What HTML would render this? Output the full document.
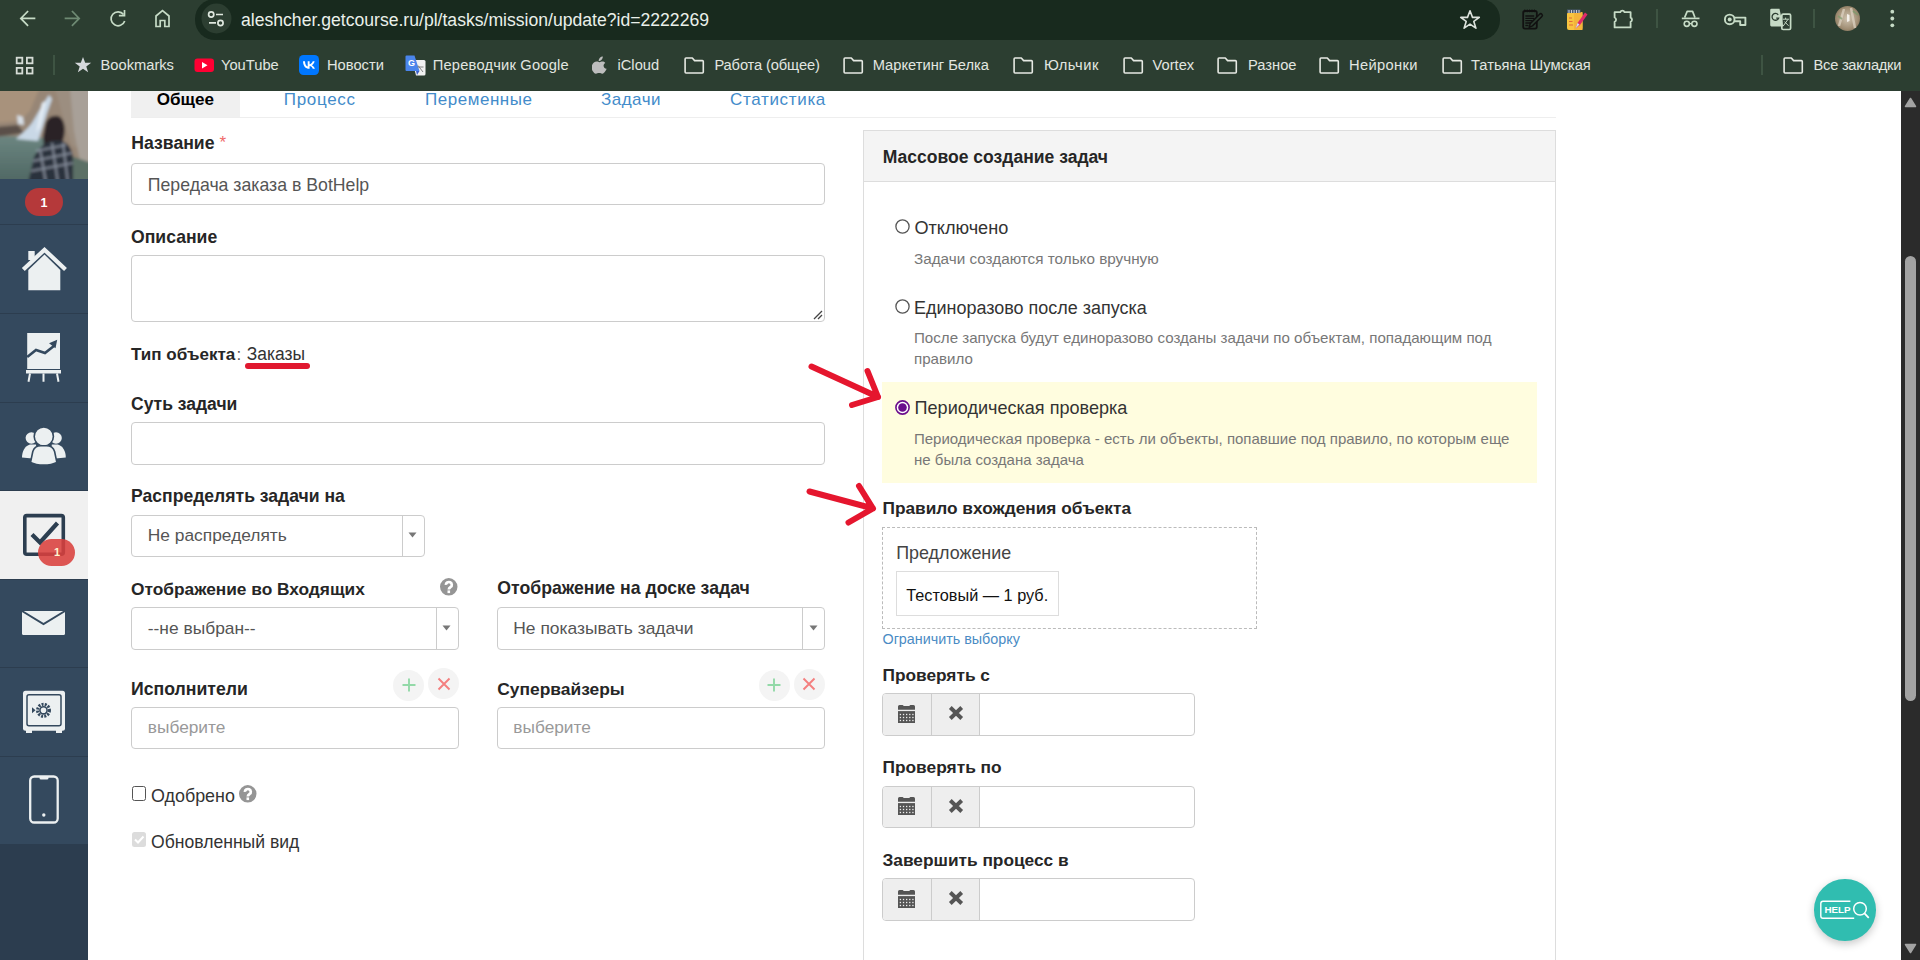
<!DOCTYPE html>
<html><head><meta charset="utf-8">
<style>
*{box-sizing:border-box;margin:0;padding:0}
html,body{width:1920px;height:960px;overflow:hidden;background:#fff;font-family:"Liberation Sans",sans-serif;color:#333}
.a{position:absolute}
.t{position:absolute;white-space:nowrap}
#chrome{position:absolute;left:0;top:0;width:1920px;height:91px;background:#2c3e31}
#omni{position:absolute;left:195px;top:-1px;width:1305px;height:41px;border-radius:20px;background:#182a1e}
.bm{position:absolute;top:56px;font-size:14.7px;color:#e2e6e0;white-space:nowrap;line-height:18px}
#side{position:absolute;left:0;top:91px;width:88px;height:869px;background:#2c3d4f}
.nav{position:absolute;left:0;width:88px;background:#34495e}
</style></head><body>
<div id="chrome">
  <svg class="a" style="left:0;top:0" width="200" height="40" viewBox="0 0 200 40">
    <g fill="none" stroke="#c6dbc6" stroke-width="1.7" stroke-linecap="square">
      <path d="M34.5 18.4H22M27.5 11.6L20.8 18.4L27.5 25.2"/>
    </g>
    <g fill="none" stroke="#6e8a73" stroke-width="1.7" stroke-linecap="square">
      <path d="M65.5 18.4H78M72.5 11.6L79.2 18.4L72.5 25.2"/>
    </g>
    <g fill="none" stroke="#c6dbc6" stroke-width="1.7">
      <path d="M123.6 14.5A7 7 0 1 0 124.7 21"/>
      <path d="M124.5 10.8V15.6H119.7" stroke-linecap="square"/>
    </g>
    <g fill="none" stroke="#c6dbc6" stroke-width="1.7">
      <path d="M156 26.5V16L162.5 10.5L169 16V26.5H164.8V20.5H160.2V26.5Z"/>
    </g>
  </svg>
  <div id="omni"></div>
  <svg class="a" style="left:200;top:3px;left:201px" width="32" height="32" viewBox="0 0 32 32">
    <circle cx="15.5" cy="15.5" r="15" fill="#2c3e31"/>
    <g fill="none" stroke="#dfe8df" stroke-width="1.7">
      <circle cx="10.2" cy="11.5" r="2.6"/><circle cx="19.5" cy="20" r="2.6"/>
      <path d="M15 11.5H22M8 19.8H15"/>
    </g>
  </svg>
  <div class="a" style="left:241px;top:9px;font-size:17.6px;color:#eaf0ea;line-height:22px;white-space:nowrap">aleshcher.getcourse.ru/pl/tasks/mission/update?id=2222269</div>
  <svg class="a" style="left:1458px;top:8px" width="24" height="24" viewBox="0 0 24 24">
    <path d="M12 2.8L14.5 9.4H21.3L15.8 13.4L17.9 20.2L12 16.1L6.1 20.2L8.2 13.4L2.7 9.4H9.5Z" fill="none" stroke="#dde3dd" stroke-width="1.6" stroke-linejoin="round"/>
  </svg>
  <!-- extensions -->
  <svg class="a" style="left:1520px;top:7px" width="26" height="26" viewBox="0 0 26 26">
    <rect x="3.2" y="4" width="13.6" height="17.6" rx="1.8" fill="none" stroke="#111" stroke-width="1.8"/>
    <path d="M4.8 2.4V5.2M7.2 2.4V5.2M9.6 2.4V5.2M12 2.4V5.2M14.4 2.4V5.2" stroke="#111" stroke-width="1.1"/>
    <path d="M5.3 9H14.2M5.3 11.4H14.2M5.3 13.7H12.5M5.3 16H10.5M5.3 18.5H8.5" stroke="#111" stroke-width="1.3"/>
    <path d="M9.2 20.2L10.2 16.6L19.6 7.2A1.6 1.6 0 0 1 21.9 9.5L12.5 18.9Z" fill="#2c3e31" stroke="#111" stroke-width="1.5" stroke-linejoin="round"/>
  </svg>
  <svg class="a" style="left:1565px;top:7px" width="26" height="26" viewBox="0 0 26 26">
    <rect x="2" y="5" width="15.5" height="18" rx="2" fill="#f8c440"/>
    <rect x="9" y="5" width="8.5" height="18" fill="#f3b43a"/>
    <rect x="2" y="2.5" width="13.5" height="3.5" fill="#4a5a70"/>
    <path d="M4 3V6M6.5 3V6M9 3V6M11.5 3V6M14 3V6" stroke="#e8e8f0" stroke-width="0.8"/>
    <path d="M4 11H7M4 14.5H7.5M4 18H8" stroke="#e06a3a" stroke-width="1"/>
    <path d="M10.5 21.5L12.5 16L20 5.5L22.5 7.5L15 18Z" fill="#e02a6a"/>
    <path d="M10.5 21.5L12.5 16L14.5 17.5Z" fill="#cfe0f0"/>
  </svg>
  <svg class="a" style="left:1611px;top:4px" width="26" height="26" viewBox="0 0 26 26">
    <path d="M3.6 8.2H9.3A2.2 2.2 0 0 1 13.5 8.2H19.6V13.7A2.2 2.2 0 0 1 19.6 17.8V23.4H3.6V17.8A2.3 2.3 0 0 0 3.6 13.5Z" fill="none" stroke="#c6dbc6" stroke-width="1.8" stroke-linejoin="round"/>
  </svg>
  <div class="a" style="left:1656px;top:9px;width:2px;height:19px;background:#3e5443"></div>
  <svg class="a" style="left:1678px;top:4px" width="26" height="26" viewBox="0 0 26 26">
    <path d="M6.6 13.6L9.2 7.4H14.6L17 13.6" fill="none" stroke="#c6dbc6" stroke-width="1.7" stroke-linejoin="round"/>
    <path d="M3.8 14.4H21.5" stroke="#c6dbc6" stroke-width="1.7"/>
    <circle cx="8.8" cy="19.8" r="2.6" fill="none" stroke="#c6dbc6" stroke-width="1.6"/>
    <circle cx="16.4" cy="19.8" r="2.6" fill="none" stroke="#c6dbc6" stroke-width="1.6"/>
    <path d="M11.4 19.6H13.8" stroke="#c6dbc6" stroke-width="1.4"/>
  </svg>
  <svg class="a" style="left:1722px;top:4px" width="28" height="26" viewBox="0 0 28 26">
    <circle cx="7.7" cy="15.4" r="4.8" fill="none" stroke="#c6dbc6" stroke-width="1.9"/>
    <circle cx="7.7" cy="15.4" r="2" fill="#c6dbc6"/>
    <path d="M12.4 13.6H23.4V21H18.2V17.2H12.4" fill="none" stroke="#c6dbc6" stroke-width="1.9" stroke-linejoin="round"/>
  </svg>
  <svg class="a" style="left:1768px;top:4px" width="26" height="28" viewBox="0 0 26 28">
    <rect x="13.8" y="10.2" width="8.8" height="15.3" rx="1.3" fill="none" stroke="#c6dbc6" stroke-width="1.7"/>
    <path d="M3.5 4.7H11.5L15.2 22.4H3.5A1.3 1.3 0 0 1 2.2 21.1V6A1.3 1.3 0 0 1 3.5 4.7Z" fill="#c6dbc6"/>
    <path d="M10.2 10.8A3.4 3.4 0 1 0 10.6 14.2H8.2" fill="none" stroke="#2c3e31" stroke-width="1.3"/>
    <path d="M14.8 15.2H21M17.6 13.6V15.2M15.2 22L19.8 15.6M16.5 17.6L20.6 21.8" stroke="#c6dbc6" stroke-width="1"/>
  </svg>
  <div class="a" style="left:1813px;top:9px;width:2px;height:19px;background:#3e5443"></div>
  <svg class="a" style="left:1835px;top:6px" width="26" height="26" viewBox="0 0 26 26">
    <defs><radialGradient id="av" cx="0.5" cy="0.5" r="0.6"><stop offset="0" stop-color="#cfc3b0"/><stop offset="0.7" stop-color="#a08e74"/><stop offset="1" stop-color="#7c6a52"/></radialGradient></defs>
    <circle cx="12.5" cy="12.5" r="12.5" fill="url(#av)"/>
    <path d="M4 20L9 3M16 2L20 22" stroke="#e0d6c6" stroke-width="2.5" opacity="0.7"/>
    <path d="M12 8L14.5 9V15L12 16Z" fill="#f4f0ea"/>
    <path d="M3 10L7 13M18 5L23 9" stroke="#7a9a6a" stroke-width="2" opacity="0.7"/>
  </svg>
  <svg class="a" style="left:1886px;top:7px" width="12" height="24" viewBox="0 0 12 24">
    <circle cx="6.3" cy="4.7" r="1.9" fill="#c6dbc6"/><circle cx="6.3" cy="11.5" r="1.9" fill="#c6dbc6"/><circle cx="6.3" cy="18.3" r="1.9" fill="#c6dbc6"/>
  </svg>

  <!-- bookmarks bar -->
  <svg class="a" style="left:14px;top:55px" width="22" height="22" viewBox="0 0 22 22">
    <g fill="none" stroke="#d6dcd6" stroke-width="1.8">
      <rect x="2.7" y="2.7" width="5.6" height="5.6"/><rect x="12.9" y="2.7" width="5.6" height="5.6"/>
      <rect x="2.7" y="12.9" width="5.6" height="5.6"/><rect x="12.9" y="12.9" width="5.6" height="5.6"/>
    </g>
  </svg>
  <div class="a" style="left:53px;top:55px;width:2px;height:20px;background:#3e5443"></div>
  <svg class="a" style="left:73px;top:55px" width="20" height="20" viewBox="0 0 20 20">
    <path d="M10 2L12.2 7.8H18.2L13.3 11.4L15.1 17.3L10 13.7L4.9 17.3L6.7 11.4L1.8 7.8H7.8Z" fill="#d5d8dc"/>
  </svg>
  <div class="bm" style="left:100.5px">Bookmarks</div>
  <svg class="a" style="left:194px;top:55px" width="20" height="20" viewBox="0 0 20 20">
    <rect x="0.5" y="3.5" width="19.5" height="13.5" rx="3" fill="#ff0033"/>
    <path d="M8 7V13.5L13.5 10.2Z" fill="#fff"/>
  </svg>
  <div class="bm" style="left:221px">YouTube</div>
  <svg class="a" style="left:299px;top:55px" width="20" height="20" viewBox="0 0 20 20">
    <rect x="0" y="0" width="20" height="20" rx="4.5" fill="#0077ff"/>
    <path d="M4 6.2H6C6.1 9.5 7.4 11.2 8.7 11.5V6.2H10.6V9.3C11.9 9.2 13.2 7.8 13.7 6.2H15.6C15.2 8.2 13.8 9.6 12.8 10.2C13.8 10.7 15.3 11.8 15.9 13.8H13.8C13.3 12.4 12.1 11.2 10.6 11.1V13.8H10.4C6.5 13.8 4.2 11.1 4 6.2Z" fill="#fff"/>
  </svg>
  <div class="bm" style="left:327px">Новости</div>
  <svg class="a" style="left:405px;top:55px" width="21" height="21" viewBox="0 0 21 21">
    <path d="M7 5H19A1.5 1.5 0 0 1 20.5 6.5V19A1.5 1.5 0 0 1 19 20.5H11Z" fill="#f1f1f1"/>
    <path d="M1.5 0.5H9.5L14.5 16H1.5A1 1 0 0 1 0.5 15V1.5A1 1 0 0 1 1.5 0.5Z" fill="#4a85ec"/>
    <path d="M11 16H14.5L12 20Z" fill="#3a5ec8"/>
    <text x="3" y="11" font-family="Liberation Sans" font-size="9" font-weight="bold" fill="#fff">G</text>
    <path d="M13 10.5L18 17M12.5 12H18.5" stroke="#777" stroke-width="0.9"/>
  </svg>
  <div class="bm" style="left:432.7px;letter-spacing:0.2px">Переводчик Google</div>
  <svg class="a" style="left:592px;top:56px" width="16" height="18" viewBox="0 0 16 18">
    <path d="M10.8 0.5C10.9 1.8 10.3 3 9.5 3.8C8.8 4.6 7.7 5.1 6.7 5C6.6 3.8 7.2 2.6 7.9 1.8C8.7 1 9.9 0.5 10.8 0.5Z" fill="#bdbdbd"/>
    <path d="M14.6 12.8C14.2 13.8 14 14.2 13.4 15.1C12.6 16.3 11.5 17.8 10.2 17.8C9 17.8 8.7 17 7.1 17.1C5.5 17.1 5.1 17.8 3.9 17.8C2.6 17.8 1.6 16.4 0.8 15.3C-1.2 12.1 -0.3 8.1 1.9 6.5C2.7 5.9 3.8 5.6 4.8 5.6C5.9 5.6 6.7 6.2 7.6 6.2C8.5 6.2 9.1 5.6 10.4 5.6C11.4 5.6 12.5 6.1 13.3 7C10.6 8.5 11.1 12.3 14.6 12.8Z" fill="#bdbdbd"/>
  </svg>
  <div class="bm" style="left:617.5px">iCloud</div>
  <svg class="a" style="left:682.5px;top:56px" width="22" height="19" viewBox="0 0 22 19"><path d="M2.1 2.9A0.9 0.9 0 0 1 3 2H9.3L11.6 4.6H19.4A0.9 0.9 0 0 1 20.3 5.5V16.1A0.9 0.9 0 0 1 19.4 17H3A0.9 0.9 0 0 1 2.1 16.1Z" fill="none" stroke="#e6e9e3" stroke-width="1.6" stroke-linejoin="round"/></svg>
  <div class="bm" style="left:714.4px;letter-spacing:-0.13px">Работа (общее)</div>
  <svg class="a" style="left:841.7px;top:56px" width="22" height="19" viewBox="0 0 22 19"><path d="M2.1 2.9A0.9 0.9 0 0 1 3 2H9.3L11.6 4.6H19.4A0.9 0.9 0 0 1 20.3 5.5V16.1A0.9 0.9 0 0 1 19.4 17H3A0.9 0.9 0 0 1 2.1 16.1Z" fill="none" stroke="#e6e9e3" stroke-width="1.6" stroke-linejoin="round"/></svg>
  <div class="bm" style="left:872.7px">Маркетинг Белка</div>
  <svg class="a" style="left:1012.0px;top:56px" width="22" height="19" viewBox="0 0 22 19"><path d="M2.1 2.9A0.9 0.9 0 0 1 3 2H9.3L11.6 4.6H19.4A0.9 0.9 0 0 1 20.3 5.5V16.1A0.9 0.9 0 0 1 19.4 17H3A0.9 0.9 0 0 1 2.1 16.1Z" fill="none" stroke="#e6e9e3" stroke-width="1.6" stroke-linejoin="round"/></svg>
  <div class="bm" style="left:1044px;letter-spacing:0.55px">Юльчик</div>
  <svg class="a" style="left:1121.7px;top:56px" width="22" height="19" viewBox="0 0 22 19"><path d="M2.1 2.9A0.9 0.9 0 0 1 3 2H9.3L11.6 4.6H19.4A0.9 0.9 0 0 1 20.3 5.5V16.1A0.9 0.9 0 0 1 19.4 17H3A0.9 0.9 0 0 1 2.1 16.1Z" fill="none" stroke="#e6e9e3" stroke-width="1.6" stroke-linejoin="round"/></svg>
  <div class="bm" style="left:1152.5px">Vortex</div>
  <svg class="a" style="left:1216.3px;top:56px" width="22" height="19" viewBox="0 0 22 19"><path d="M2.1 2.9A0.9 0.9 0 0 1 3 2H9.3L11.6 4.6H19.4A0.9 0.9 0 0 1 20.3 5.5V16.1A0.9 0.9 0 0 1 19.4 17H3A0.9 0.9 0 0 1 2.1 16.1Z" fill="none" stroke="#e6e9e3" stroke-width="1.6" stroke-linejoin="round"/></svg>
  <div class="bm" style="left:1248px">Разное</div>
  <svg class="a" style="left:1317.5px;top:56px" width="22" height="19" viewBox="0 0 22 19"><path d="M2.1 2.9A0.9 0.9 0 0 1 3 2H9.3L11.6 4.6H19.4A0.9 0.9 0 0 1 20.3 5.5V16.1A0.9 0.9 0 0 1 19.4 17H3A0.9 0.9 0 0 1 2.1 16.1Z" fill="none" stroke="#e6e9e3" stroke-width="1.6" stroke-linejoin="round"/></svg>
  <div class="bm" style="left:1349px;letter-spacing:0.36px">Нейронки</div>
  <svg class="a" style="left:1440.7px;top:56px" width="22" height="19" viewBox="0 0 22 19"><path d="M2.1 2.9A0.9 0.9 0 0 1 3 2H9.3L11.6 4.6H19.4A0.9 0.9 0 0 1 20.3 5.5V16.1A0.9 0.9 0 0 1 19.4 17H3A0.9 0.9 0 0 1 2.1 16.1Z" fill="none" stroke="#e6e9e3" stroke-width="1.6" stroke-linejoin="round"/></svg>
  <div class="bm" style="left:1471px">Татьяна Шумская</div>
  <svg class="a" style="left:1781.6px;top:56px" width="22" height="19" viewBox="0 0 22 19"><path d="M2.1 2.9A0.9 0.9 0 0 1 3 2H9.3L11.6 4.6H19.4A0.9 0.9 0 0 1 20.3 5.5V16.1A0.9 0.9 0 0 1 19.4 17H3A0.9 0.9 0 0 1 2.1 16.1Z" fill="none" stroke="#e6e9e3" stroke-width="1.6" stroke-linejoin="round"/></svg>
  <div class="bm" style="left:1813.6px;letter-spacing:-0.27px">Все закладки</div>
  <div class="a" style="left:1760.7px;top:55px;width:2px;height:20px;background:#3e5443"></div>
</div>

<div id="side">
  <svg class="a" style="left:0;top:0" width="88" height="88" viewBox="0 0 88 88">
    <defs>
      <filter id="bl" x="-10%" y="-10%" width="120%" height="120%"><feGaussianBlur stdDeviation="1.6"/></filter>
      <linearGradient id="wat" x1="0" y1="0" x2="0" y2="1"><stop offset="0" stop-color="#6b8580"/><stop offset="1" stop-color="#4e6662"/></linearGradient>
      <pattern id="plaid" width="9" height="9" patternUnits="userSpaceOnUse" patternTransform="rotate(-20)">
        <rect width="9" height="9" fill="#283040"/>
        <rect x="0" y="3" width="9" height="1.6" fill="#8a98ac"/>
        <rect x="3" y="0" width="1.6" height="9" fill="#6c7a90"/>
      </pattern>
    </defs>
    <g filter="url(#bl)">
      <rect x="-4" y="-4" width="96" height="96" fill="#978676"/>
      <path d="M-4 -4H40L30 20L20 30L-4 32Z" fill="#a8927c"/>
      <path d="M55 -4H92V60L72 55L64 30Z" fill="#9c8e80"/>
      <path d="M70 -4H92V75L80 70L74 40Z" fill="#a8a098"/>
      <path d="M-4 36L18 34L24 42L-4 46Z" fill="#5a5048"/>
      <path d="M-4 46C10 44 30 46 44 47L60 52L70 92H-4Z" fill="url(#wat)"/>
      <path d="M68 64L92 72V92H70Z" fill="#5c7066"/>
      <path d="M49 4C45 10 38 22 32 32C26 40 20 44 16 48L38 50L42 38L47 22L52 8Z" fill="#c9d8e6"/>
      <path d="M42 12L46 10L40 36L36 42Z" fill="#e6eef6"/>
      <path d="M17 24L23 26L24 34L18 33Z" fill="#d8e0e8"/>
      <path d="M45 35C46 27 52 24 58 25C64 27 66 36 64 46C62 54 58 58 54 60L44 58L43 46Z" fill="#2a2428"/>
      <path d="M28 92L34 66C38 58 44 52 52 50L62 50C68 52 72 58 73 66L73 92Z" fill="#2c313e"/>
      <path d="M33 70L72 62M31 80L73 72M36 60L66 54M40 58L46 92M52 52L58 92M63 52L68 92" stroke="#b8c2d0" stroke-width="1.6" opacity="0.7"/>
    </g>
  </svg>
  <div class="nav" style="top:88px;height:45px"></div>
  <div class="a" style="left:25px;top:97px;width:38px;height:28px;border-radius:14px;background:#b5393a;color:#fff;font-weight:bold;font-size:12.5px;line-height:30px;text-align:center">1</div>
  <div class="nav" style="top:134px;height:88px"></div>
  <svg class="a" style="left:0;top:134px" width="88" height="88" viewBox="0 0 88 88">
    <path d="M28.3 45V65.3H60.3V45L44.5 29.5Z" fill="#ecf0f1"/>
    <path d="M23.3 44.5L44.5 24.8L65.5 44.5" fill="none" stroke="#ecf0f1" stroke-width="4.2"/>
    <rect x="28.3" y="26" width="6.4" height="9" fill="#ecf0f1"/>
  </svg>
  <div class="nav" style="top:223px;height:88px"></div>
  <svg class="a" style="left:0;top:223px" width="88" height="88" viewBox="0 0 88 88">
    <rect x="27.2" y="19" width="32.8" height="36" fill="#ecf0f1"/>
    <path d="M27.2 43L36 36L45 39L54.5 31.5" fill="none" stroke="#34495e" stroke-width="2.6"/>
    <path d="M50.5 29.5L56.2 27L55 33Z" fill="#34495e" stroke="#34495e" stroke-width="1.5"/>
    <rect x="26" y="56" width="35" height="3.5" fill="#ecf0f1"/>
    <path d="M30 59.5L28.5 67.7M43.5 59.5V67.7M57 59.5L58.5 67.7" stroke="#ecf0f1" stroke-width="2"/>
  </svg>
  <div class="nav" style="top:312px;height:87px"></div>
  <svg class="a" style="left:0;top:312px" width="88" height="88" viewBox="0 0 88 88">
    <circle cx="31.4" cy="35" r="5.8" fill="#ecf0f1"/>
    <circle cx="56" cy="35" r="5.8" fill="#ecf0f1"/>
    <path d="M22 54.5C22 48 25 43 30 41.5H36L37.5 56Z" fill="#ecf0f1"/>
    <path d="M65.8 54.5C65.8 48 62.8 43 57.8 41.5H51.8L50.3 56Z" fill="#ecf0f1"/>
    <circle cx="43.8" cy="33.5" r="9.6" fill="#ecf0f1" stroke="#34495e" stroke-width="1.6"/>
    <path d="M30.5 59.5L32.8 48.5C34 44.5 37.5 42.8 41 42.8H46.4C49.9 42.8 53.4 44.5 54.6 48.5L56.9 59.5C50 63 37.4 63 30.5 59.5Z" fill="#ecf0f1" stroke="#34495e" stroke-width="1.6"/>
  </svg>
  <div class="nav" style="top:400px;height:88px;background:#f0f0f0"></div>
  <svg class="a" style="left:0;top:400px" width="88" height="88" viewBox="0 0 88 88">
    <rect x="24.8" y="24.6" width="38.5" height="38.7" rx="2" fill="none" stroke="#2c3e50" stroke-width="3.6"/>
    <path d="M32 43.5L40 51.5L57.5 32" fill="none" stroke="#2c3e50" stroke-width="4.2"/>
  </svg>
  <div class="a" style="left:38px;top:448px;width:37px;height:27px;border-radius:13.5px;background:rgba(217,64,60,0.88);color:#fff7d0;font-weight:bold;font-size:11px;line-height:27px;text-align:center;padding-left:1px">1</div>
  <div class="nav" style="top:489px;height:87px"></div>
  <svg class="a" style="left:0;top:489px" width="88" height="88" viewBox="0 0 88 88">
    <path d="M22 31H65V53.5A1.5 1.5 0 0 1 63.5 55H23.5A1.5 1.5 0 0 1 22 53.5Z" fill="#ecf0f1"/>
    <path d="M22 31L43.5 44L65 31" fill="none" stroke="#34495e" stroke-width="2"/>
  </svg>
  <div class="nav" style="top:577px;height:88px"></div>
  <svg class="a" style="left:0;top:577px" width="88" height="88" viewBox="0 0 88 88">
    <rect x="23" y="22.8" width="42" height="40" rx="2.5" fill="#ecf0f1"/>
    <rect x="27" y="26.8" width="34" height="31" rx="2" fill="none" stroke="#34495e" stroke-width="1.5"/>
    <rect x="26" y="62" width="6" height="3" fill="#ecf0f1"/><rect x="56" y="62" width="6" height="3" fill="#ecf0f1"/>
    <circle cx="43.5" cy="42.3" r="6" fill="none" stroke="#34495e" stroke-width="3" stroke-dasharray="2 1.2"/>
    <circle cx="43.5" cy="42.3" r="3.6" fill="none" stroke="#34495e" stroke-width="1.6"/>
    <path d="M32 39.3V45.3L35.5 42.3Z" fill="#34495e"/>
  </svg>
  <div class="nav" style="top:666px;height:87px"></div>
  <svg class="a" style="left:0;top:666px" width="88" height="88" viewBox="0 0 88 88">
    <rect x="30.2" y="19.5" width="27.5" height="46" rx="4" fill="none" stroke="#ecf0f1" stroke-width="2.3"/>
    <path d="M39.5 19.5H48.5V21A1.5 1.5 0 0 1 47 22.5H41A1.5 1.5 0 0 1 39.5 21Z" fill="#ecf0f1"/>
    <circle cx="43.8" cy="58" r="1.7" fill="#ecf0f1"/>
  </svg>
</div>

<div id="main">
<div class="a" style="left:131px;top:91px;width:109px;height:26px;background:#f0f0f0"></div>
<div class="a" style="left:131px;top:117px;width:1425px;height:1px;background:#eee"></div>
<div class="t" style="left:156.75px;top:88.59px;font-size:17.07px;line-height:21px;font-weight:bold;color:#000;">Общее</div>
<div class="t" style="left:283.8px;top:88.61px;font-size:17px;line-height:21px;color:#428bca;letter-spacing:0.68px">Процесс</div>
<div class="t" style="left:425px;top:88.61px;font-size:17px;line-height:21px;color:#428bca;letter-spacing:0.53px">Переменные</div>
<div class="t" style="left:601px;top:88.61px;font-size:17px;line-height:21px;color:#428bca;letter-spacing:0.48px">Задачи</div>
<div class="t" style="left:730px;top:88.61px;font-size:17px;line-height:21px;color:#428bca;letter-spacing:0.67px">Статистика</div>
<div class="t" style="left:131.3px;top:131.69px;font-size:17.64px;line-height:22px;font-weight:bold;color:#262626;">Название</div>
<div class="t" style="left:219.5px;top:132.41px;font-size:17px;line-height:21px;color:#f06a6a;">*</div>
<div class="a" style="left:131px;top:163px;width:694px;height:42px;border:1px solid #ccc;border-radius:4px;background:#fff"></div>
<div class="t" style="left:147.8px;top:173.97px;font-size:17.69px;line-height:22px;color:#555;">Передача заказа в BotHelp</div>
<div class="t" style="left:131px;top:226.10px;font-size:17.61px;line-height:22px;font-weight:bold;color:#262626;">Описание</div>
<div class="a" style="left:131px;top:255px;width:694px;height:67px;border:1px solid #ccc;border-radius:4px;background:#fff"></div>
<svg class="a" style="left:812px;top:309px" width="12" height="12" viewBox="0 0 12 12"><path d="M2 10L10 2M6 10L10 6" stroke="#444" stroke-width="1.3"/></svg>
<div class="t" style="left:131px;top:343.79px;font-size:17.06px;line-height:21px;font-weight:bold;color:#262626;">Тип объекта</div>
<div class="t" style="left:236.5px;top:343.79px;font-size:17.06px;line-height:21px;color:#555;">:</div>
<div class="t" style="left:246.75px;top:343.16px;font-size:17.43px;line-height:22px;color:#333;">Заказы</div>
<div class="a" style="left:244.7px;top:363.3px;width:65.30000000000001px;height:5.899999999999977px;background:#e0182f;border-radius:3px"></div>
<div class="t" style="left:131px;top:393.13px;font-size:17.51px;line-height:22px;font-weight:bold;color:#262626;">Суть задачи</div>
<div class="a" style="left:131px;top:422px;width:694px;height:43px;border:1px solid #ccc;border-radius:4px;background:#fff"></div>
<div class="t" style="left:131px;top:484.81px;font-size:17.58px;line-height:22px;font-weight:bold;color:#262626;">Распределять задачи на</div>
<div class="a" style="left:131px;top:515px;width:294px;height:42px;border:1px solid #ccc;border-radius:4px;background:#fff"></div>
<div class="a" style="left:402px;top:516px;width:1px;height:40px;background:#ccc"></div>
<svg class="a" style="left:408px;top:532px" width="9" height="6" viewBox="0 0 9 6"><path d="M0.5 0.5H8.5L4.5 5.5Z" fill="#777"/></svg>
<div class="t" style="left:147.8px;top:523.98px;font-size:17.37px;line-height:22px;color:#555;">Не распределять</div>
<div class="t" style="left:131px;top:577.60px;font-size:17.31px;line-height:22px;font-weight:bold;color:#262626;">Отображение во Входящих</div>
<svg class="a" style="left:439.7px;top:578px" width="18" height="18" viewBox="0 0 18 18"><circle cx="8.75" cy="8.85" r="8.75" fill="#959595"/><path d="M5.9 6.9A2.95 2.75 0 1 1 10.6 9C9.4 9.7 8.8 10.2 8.8 11.6" fill="none" stroke="#fff" stroke-width="2.7"/><rect x="7.5" y="12.4" width="2.6" height="2.7" fill="#fff"/></svg>
<div class="a" style="left:131px;top:607px;width:328px;height:43px;border:1px solid #ccc;border-radius:4px;background:#fff"></div>
<div class="a" style="left:436px;top:608px;width:1px;height:41px;background:#ccc"></div>
<svg class="a" style="left:442px;top:625px" width="9" height="6" viewBox="0 0 9 6"><path d="M0.5 0.5H8.5L4.5 5.5Z" fill="#777"/></svg>
<div class="t" style="left:147.8px;top:617.17px;font-size:17.39px;line-height:22px;color:#555;">--не выбран--</div>
<div class="t" style="left:497.3px;top:577.28px;font-size:17.66px;line-height:22px;font-weight:bold;color:#262626;">Отображение на доске задач</div>
<div class="a" style="left:497px;top:607px;width:328px;height:43px;border:1px solid #ccc;border-radius:4px;background:#fff"></div>
<div class="a" style="left:802px;top:608px;width:1px;height:41px;background:#ccc"></div>
<svg class="a" style="left:808.5px;top:625px" width="9" height="6" viewBox="0 0 9 6"><path d="M0.5 0.5H8.5L4.5 5.5Z" fill="#777"/></svg>
<div class="t" style="left:513.3px;top:616.96px;font-size:17.42px;line-height:22px;color:#555;">Не показывать задачи</div>
<div class="t" style="left:131px;top:677.87px;font-size:17.68px;line-height:22px;font-weight:bold;color:#262626;">Исполнители</div>
<div class="a" style="left:393.3px;top:669.5px;width:31px;height:31px;border-radius:50%;background:#f4f4f4"></div>
<svg class="a" style="left:400.8px;top:677px" width="16" height="16" viewBox="0 0 16 16"><path d="M8 1.5V14.5M1.5 8H14.5" stroke="#93d9a8" stroke-width="1.9"/></svg>
<div class="a" style="left:428.1px;top:668.0px;width:31px;height:31px;border-radius:50%;background:#f4f4f4"></div>
<svg class="a" style="left:436.6px;top:676.5px" width="14" height="14" viewBox="0 0 14 14"><path d="M1.5 1.5L12.5 12.5M12.5 1.5L1.5 12.5" stroke="#f47f7f" stroke-width="1.9"/></svg>
<div class="a" style="left:131px;top:707px;width:328px;height:42px;border:1px solid #ccc;border-radius:4px;background:#fff"></div>
<div class="t" style="left:147.8px;top:716.30px;font-size:17.31px;line-height:22px;color:#999;">выберите</div>
<div class="t" style="left:497.3px;top:677.97px;font-size:17.4px;line-height:22px;font-weight:bold;color:#262626;">Супервайзеры</div>
<div class="a" style="left:758.9px;top:669.5px;width:31px;height:31px;border-radius:50%;background:#f4f4f4"></div>
<svg class="a" style="left:766.4px;top:677px" width="16" height="16" viewBox="0 0 16 16"><path d="M8 1.5V14.5M1.5 8H14.5" stroke="#93d9a8" stroke-width="1.9"/></svg>
<div class="a" style="left:793.9px;top:668.5px;width:31px;height:31px;border-radius:50%;background:#f4f4f4"></div>
<svg class="a" style="left:802.4px;top:677px" width="14" height="14" viewBox="0 0 14 14"><path d="M1.5 1.5L12.5 12.5M12.5 1.5L1.5 12.5" stroke="#f47f7f" stroke-width="1.9"/></svg>
<div class="a" style="left:497px;top:707px;width:328px;height:42px;border:1px solid #ccc;border-radius:4px;background:#fff"></div>
<div class="t" style="left:513.3px;top:716.00px;font-size:17.31px;line-height:22px;color:#999;">выберите</div>
<div class="a" style="left:132px;top:786px;width:14px;height:15px;border:1.5px solid #555;border-radius:2.5px;background:#fff"></div>
<div class="t" style="left:151px;top:784.50px;font-size:17.9px;line-height:22px;color:#333;">Одобрено</div>
<svg class="a" style="left:238.5px;top:785px" width="18" height="18" viewBox="0 0 18 18"><circle cx="8.75" cy="8.85" r="8.75" fill="#959595"/><path d="M5.9 6.9A2.95 2.75 0 1 1 10.6 9C9.4 9.7 8.8 10.2 8.8 11.6" fill="none" stroke="#fff" stroke-width="2.7"/><rect x="7.5" y="12.4" width="2.6" height="2.7" fill="#fff"/></svg>
<div class="a" style="left:132px;top:832px;width:14px;height:15px;background:#dcdcdc;border-radius:2.5px"></div>
<svg class="a" style="left:132px;top:832px" width="14" height="15" viewBox="0 0 14 15"><path d="M3 7.5L6 10.5L11.5 4.5" fill="none" stroke="#fff" stroke-width="2"/></svg>
<div class="t" style="left:151px;top:830.91px;font-size:17.59px;line-height:22px;color:#333;">Обновленный вид</div>
<div class="a" style="left:863px;top:130px;width:693px;height:840px;border:1px solid #ddd;background:#fff"></div>
<div class="a" style="left:864px;top:131px;width:691px;height:51px;background:#f4f4f4;border-bottom:1px solid #ddd"></div>
<div class="t" style="left:882.7px;top:146.22px;font-size:17.55px;line-height:22px;font-weight:bold;color:#262626;">Массовое создание задач</div>
<svg class="a" style="left:895px;top:218.8px" width="15" height="15" viewBox="0 0 15 15"><circle cx="7.5" cy="7.5" r="6.6" fill="#fff" stroke="#555" stroke-width="1.3"/></svg>
<div class="t" style="left:914.4px;top:217.42px;font-size:18.12px;line-height:23px;color:#333;">Отключено</div>
<div class="t" style="left:914px;top:248.51px;font-size:15.27px;line-height:19px;color:#777;">Задачи создаются только вручную</div>
<svg class="a" style="left:895px;top:298.5px" width="15" height="15" viewBox="0 0 15 15"><circle cx="7.5" cy="7.5" r="6.6" fill="#fff" stroke="#555" stroke-width="1.3"/></svg>
<div class="t" style="left:914px;top:296.97px;font-size:17.98px;line-height:22px;color:#333;">Единоразово после запуска</div>
<div class="t" style="left:914px;top:328.36px;font-size:15.12px;line-height:19px;color:#777;">После запуска будут единоразово созданы задачи по объектам, попадающим под</div>
<div class="t" style="left:914px;top:348.76px;font-size:15.12px;line-height:19px;color:#777;">правило</div>
<div class="a" style="left:882px;top:382px;width:655px;height:101px;background:#fffddf"></div>
<svg class="a" style="left:895px;top:400px" width="15" height="15" viewBox="0 0 15 15"><circle cx="7.5" cy="7.5" r="6.6" fill="#fff" stroke="#6b0d8c" stroke-width="1.6"/><circle cx="7.5" cy="7.5" r="4.3" fill="#6b0d8c"/></svg>
<div class="t" style="left:914.6px;top:397.24px;font-size:18.07px;line-height:23px;color:#333;">Периодическая проверка</div>
<div class="t" style="left:914px;top:429.05px;font-size:15.01px;line-height:19px;color:#777;">Периодическая проверка - есть ли объекты, попавшие под правило, по которым еще</div>
<div class="t" style="left:914px;top:450.30px;font-size:15.01px;line-height:19px;color:#777;">не была создана задача</div>
<div class="t" style="left:882.5px;top:496.76px;font-size:17.28px;line-height:22px;font-weight:bold;color:#262626;">Правило вхождения объекта</div>
<div class="a" style="left:882px;top:527px;width:375px;height:102px;border:1px dashed #bbb"></div>
<div class="t" style="left:896.25px;top:542.05px;font-size:17.9px;line-height:22px;color:#444;">Предложение</div>
<div class="a" style="left:896px;top:571px;width:163px;height:45px;border:1px solid #ddd"></div>
<div class="t" style="left:906.25px;top:584.86px;font-size:16.29px;line-height:20px;color:#111;">Тестовый — 1 руб.</div>
<div class="t" style="left:882.5px;top:630.28px;font-size:14.34px;line-height:18px;color:#4a8bc4;">Ограничить выборку</div>
<div class="t" style="left:882.5px;top:664.26px;font-size:17.29px;line-height:22px;font-weight:bold;color:#262626;">Проверять с</div>
<div class="a" style="left:882px;top:693px;width:313px;height:43px;border:1px solid #ccc;border-radius:4px;background:#fff"></div>
<div class="a" style="left:883px;top:694px;width:49px;height:41px;background:#eee;border-radius:3px 0 0 3px;border-right:1px solid #ccc"></div>
<div class="a" style="left:932px;top:694px;width:48px;height:41px;background:#eee;border-right:1px solid #ccc"></div>
<svg class="a" style="left:896px;top:703.50px" width="20" height="20" viewBox="0 0 20 20"><path d="M2 2.6A1.5 1.5 0 0 1 3.5 1.1H6.5A1 1 0 0 1 7.5 2.1H13.5A1 1 0 0 1 14.5 1.1H17.5A1.5 1.5 0 0 1 19 2.6V5.8H2Z" fill="#555"/><rect x="2" y="7.1" width="17" height="11.9" fill="#555"/><rect x="3.75" y="9.85" width="1.3" height="1.3" fill="#eee"/><rect x="3.75" y="12.85" width="1.3" height="1.3" fill="#eee"/><rect x="3.75" y="15.85" width="1.3" height="1.3" fill="#eee"/><rect x="6.88" y="9.85" width="1.3" height="1.3" fill="#eee"/><rect x="6.88" y="12.85" width="1.3" height="1.3" fill="#eee"/><rect x="6.88" y="15.85" width="1.3" height="1.3" fill="#eee"/><rect x="10.00" y="9.85" width="1.3" height="1.3" fill="#eee"/><rect x="10.00" y="12.85" width="1.3" height="1.3" fill="#eee"/><rect x="10.00" y="15.85" width="1.3" height="1.3" fill="#eee"/><rect x="13.12" y="9.85" width="1.3" height="1.3" fill="#eee"/><rect x="13.12" y="12.85" width="1.3" height="1.3" fill="#eee"/><rect x="13.12" y="15.85" width="1.3" height="1.3" fill="#eee"/><rect x="16.25" y="9.85" width="1.3" height="1.3" fill="#eee"/><rect x="16.25" y="12.85" width="1.3" height="1.3" fill="#eee"/><rect x="16.25" y="15.85" width="1.3" height="1.3" fill="#eee"/></svg>
<svg class="a" style="left:945.7px;top:703.30px" width="20" height="20" viewBox="0 0 20 20"><path d="M4.3 4.5L15.7 15.5M15.7 4.5L4.3 15.5" stroke="#555" stroke-width="3.9"/></svg>
<div class="t" style="left:882.5px;top:756.24px;font-size:17.34px;line-height:22px;font-weight:bold;color:#262626;">Проверять по</div>
<div class="a" style="left:882px;top:786px;width:313px;height:42px;border:1px solid #ccc;border-radius:4px;background:#fff"></div>
<div class="a" style="left:883px;top:787px;width:49px;height:40px;background:#eee;border-radius:3px 0 0 3px;border-right:1px solid #ccc"></div>
<div class="a" style="left:932px;top:787px;width:48px;height:40px;background:#eee;border-right:1px solid #ccc"></div>
<svg class="a" style="left:896px;top:796.00px" width="20" height="20" viewBox="0 0 20 20"><path d="M2 2.6A1.5 1.5 0 0 1 3.5 1.1H6.5A1 1 0 0 1 7.5 2.1H13.5A1 1 0 0 1 14.5 1.1H17.5A1.5 1.5 0 0 1 19 2.6V5.8H2Z" fill="#555"/><rect x="2" y="7.1" width="17" height="11.9" fill="#555"/><rect x="3.75" y="9.85" width="1.3" height="1.3" fill="#eee"/><rect x="3.75" y="12.85" width="1.3" height="1.3" fill="#eee"/><rect x="3.75" y="15.85" width="1.3" height="1.3" fill="#eee"/><rect x="6.88" y="9.85" width="1.3" height="1.3" fill="#eee"/><rect x="6.88" y="12.85" width="1.3" height="1.3" fill="#eee"/><rect x="6.88" y="15.85" width="1.3" height="1.3" fill="#eee"/><rect x="10.00" y="9.85" width="1.3" height="1.3" fill="#eee"/><rect x="10.00" y="12.85" width="1.3" height="1.3" fill="#eee"/><rect x="10.00" y="15.85" width="1.3" height="1.3" fill="#eee"/><rect x="13.12" y="9.85" width="1.3" height="1.3" fill="#eee"/><rect x="13.12" y="12.85" width="1.3" height="1.3" fill="#eee"/><rect x="13.12" y="15.85" width="1.3" height="1.3" fill="#eee"/><rect x="16.25" y="9.85" width="1.3" height="1.3" fill="#eee"/><rect x="16.25" y="12.85" width="1.3" height="1.3" fill="#eee"/><rect x="16.25" y="15.85" width="1.3" height="1.3" fill="#eee"/></svg>
<svg class="a" style="left:945.7px;top:795.80px" width="20" height="20" viewBox="0 0 20 20"><path d="M4.3 4.5L15.7 15.5M15.7 4.5L4.3 15.5" stroke="#555" stroke-width="3.9"/></svg>
<div class="t" style="left:882.5px;top:849.26px;font-size:17.29px;line-height:22px;font-weight:bold;color:#262626;">Завершить процесс в</div>
<div class="a" style="left:882px;top:878px;width:313px;height:43px;border:1px solid #ccc;border-radius:4px;background:#fff"></div>
<div class="a" style="left:883px;top:879px;width:49px;height:41px;background:#eee;border-radius:3px 0 0 3px;border-right:1px solid #ccc"></div>
<div class="a" style="left:932px;top:879px;width:48px;height:41px;background:#eee;border-right:1px solid #ccc"></div>
<svg class="a" style="left:896px;top:888.50px" width="20" height="20" viewBox="0 0 20 20"><path d="M2 2.6A1.5 1.5 0 0 1 3.5 1.1H6.5A1 1 0 0 1 7.5 2.1H13.5A1 1 0 0 1 14.5 1.1H17.5A1.5 1.5 0 0 1 19 2.6V5.8H2Z" fill="#555"/><rect x="2" y="7.1" width="17" height="11.9" fill="#555"/><rect x="3.75" y="9.85" width="1.3" height="1.3" fill="#eee"/><rect x="3.75" y="12.85" width="1.3" height="1.3" fill="#eee"/><rect x="3.75" y="15.85" width="1.3" height="1.3" fill="#eee"/><rect x="6.88" y="9.85" width="1.3" height="1.3" fill="#eee"/><rect x="6.88" y="12.85" width="1.3" height="1.3" fill="#eee"/><rect x="6.88" y="15.85" width="1.3" height="1.3" fill="#eee"/><rect x="10.00" y="9.85" width="1.3" height="1.3" fill="#eee"/><rect x="10.00" y="12.85" width="1.3" height="1.3" fill="#eee"/><rect x="10.00" y="15.85" width="1.3" height="1.3" fill="#eee"/><rect x="13.12" y="9.85" width="1.3" height="1.3" fill="#eee"/><rect x="13.12" y="12.85" width="1.3" height="1.3" fill="#eee"/><rect x="13.12" y="15.85" width="1.3" height="1.3" fill="#eee"/><rect x="16.25" y="9.85" width="1.3" height="1.3" fill="#eee"/><rect x="16.25" y="12.85" width="1.3" height="1.3" fill="#eee"/><rect x="16.25" y="15.85" width="1.3" height="1.3" fill="#eee"/></svg>
<svg class="a" style="left:945.7px;top:888.30px" width="20" height="20" viewBox="0 0 20 20"><path d="M4.3 4.5L15.7 15.5M15.7 4.5L4.3 15.5" stroke="#555" stroke-width="3.9"/></svg>
<svg class="a" style="left:790px;top:350px" width="100" height="180" viewBox="790 350 100 180">
<g fill="none" stroke="#e5162e" stroke-width="6" stroke-linecap="round" stroke-linejoin="round">
<path d="M811.5 366.5L878 397M867.5 371L878 397L852 405"/>
<path d="M809.5 491.5L873 508.5M859 486L873 508.5L848.5 522.5"/>
</g></svg>
<div class="a" style="left:1814.2px;top:879px;width:61.6px;height:61.6px;border-radius:50%;background:#30bdb0;box-shadow:0 3px 8px rgba(0,0,0,0.22)"></div>
<svg class="a" style="left:1814px;top:879px" width="62" height="62" viewBox="0 0 62 62">
<path d="M36.4 22.25H9A2.2 2.2 0 0 0 6.8 24.45V37.1A2.2 2.2 0 0 0 9 39.3H40.2" fill="none" stroke="#fff" stroke-width="1.4"/>
<text x="10.4" y="34.3" font-family="Liberation Sans" font-weight="bold" font-size="9.8" fill="#fff">HELP</text>
<circle cx="46" cy="29.75" r="6.3" fill="none" stroke="#fff" stroke-width="1.5"/>
<path d="M50.5 34.3L54.75 38.9" stroke="#fff" stroke-width="1.7"/>
</svg>
<div class="a" style="left:1901px;top:91px;width:19px;height:869px;background:#2b2b2b"></div>
<svg class="a" style="left:1901px;top:91px" width="19" height="869" viewBox="0 0 19 869"><path d="M4.5 15.5L9.5 7.5L14.5 15.5Z" fill="#a3a3a3" stroke="#a3a3a3" stroke-width="1.5" stroke-linejoin="round"/><path d="M4.5 853.5L9.5 861.5L14.5 853.5Z" fill="#a3a3a3" stroke="#a3a3a3" stroke-width="1.5" stroke-linejoin="round"/></svg>
<div class="a" style="left:1905px;top:256px;width:11px;height:445px;background:#a3a3a3;border-radius:6px"></div>
</div>
</body></html>
